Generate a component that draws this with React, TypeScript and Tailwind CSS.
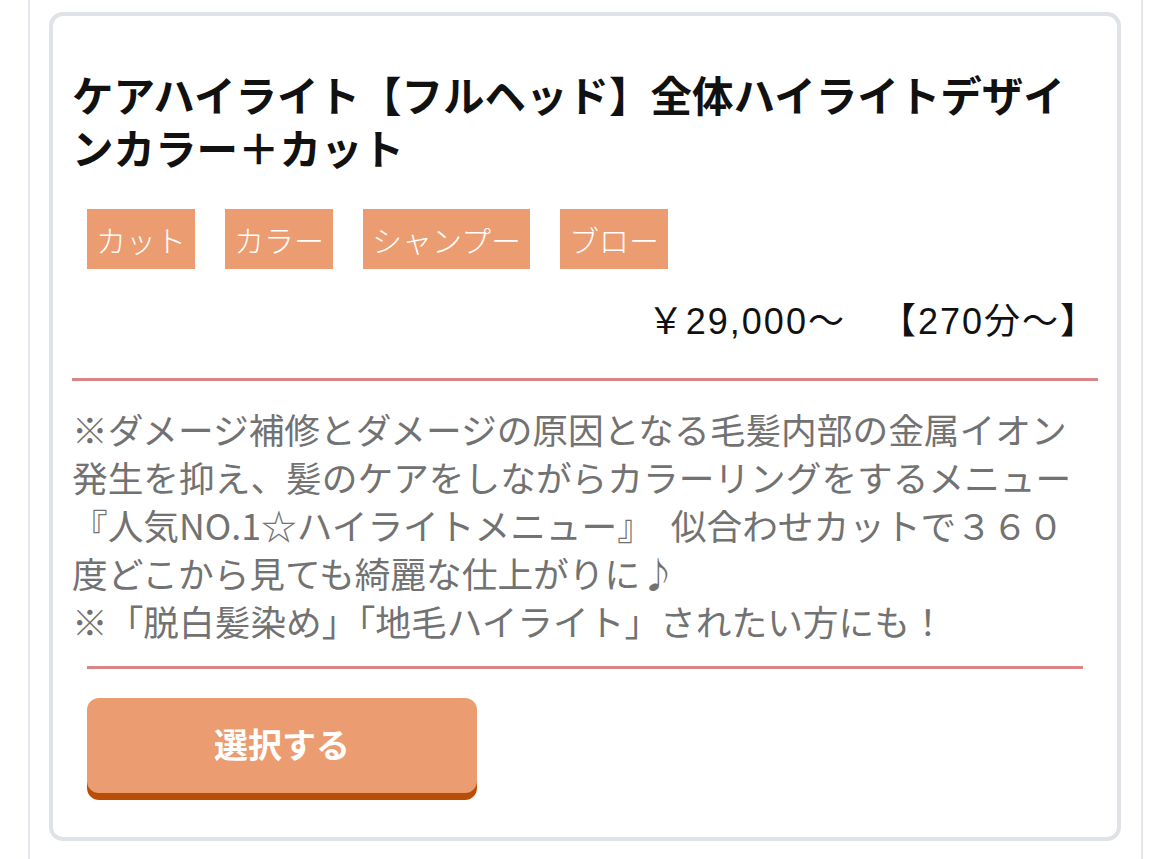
import React from 'react';

const tags = ['カット', 'カラー', 'シャンプー', 'ブロー'];

const App: React.FC = () => {
  return (
    <div
      className="min-h-screen bg-white"
      style={{ fontFamily: '"Noto Sans CJK JP", "Noto Sans", sans-serif' }}
    >
      <div className="ml-[28px] mr-[27px] min-h-screen border-x-2 border-[#e4e7eb] pl-[19px] pr-[20px] pt-[12px] pb-[20px]">
        {/* Menu card */}
        <div className="rounded-[14px] border-4 border-[#dfe2e7] bg-white px-[19px] pt-[52px] pb-[44px]">
          <h2 className="whitespace-nowrap text-[41.5px] font-bold leading-[53px] text-[#111]">
            ケアハイライト【フルヘッド】全体ハイライトデザイ
            <br />
            ンカラー＋カット
          </h2>

          <div className="mt-[35px] flex gap-[30px] pl-[15px]">
            {tags.map((t) => (
              <span
                key={t}
                className="bg-[#eb9d71] px-[9px] py-[8px] text-[30px] font-light leading-[44px] text-white"
              >
                {t}
              </span>
            ))}
          </div>

          <p className="mt-[31px] text-right font-['Liberation_Sans','Noto_Sans_CJK_JP',sans-serif] text-[36px] leading-[44px] tracking-[2px] text-[#111]">
            ￥29,000～　<span className="ml-[14px]">【270分～】</span>
          </p>

          <div className="mt-[34px] h-[3px] bg-[#d98585]" />

          <p className="mt-[24px] whitespace-nowrap text-[35.7px] leading-[48px] text-[#727272]">
            ※ダメージ補修とダメージの原因となる毛髪内部の金属イオン
            <br />
            発生を抑え、髪のケアをしながらカラーリングをするメニュー
            <br />
            『人気NO.1☆ハイライトメニュー』　似合わせカットで３６０
            <br />
            度どこから見ても綺麗な仕上がりに♪
            <br />
            ※「脱白髪染め」「地毛ハイライト」されたい方にも！
          </p>

          <div className="mx-[15px] mt-[21px] h-[3px] bg-[#d98585]" />

          <div className="mt-[29px] pl-[15px]">
            <button className="h-[95px] w-[390px] rounded-[12px] bg-[#eb9d71] pb-[4px] text-[34px] font-bold text-white shadow-[0_7px_0_#b94f06]">
              選択する
            </button>
          </div>
        </div>
      </div>
    </div>
  );
};

export default App;
